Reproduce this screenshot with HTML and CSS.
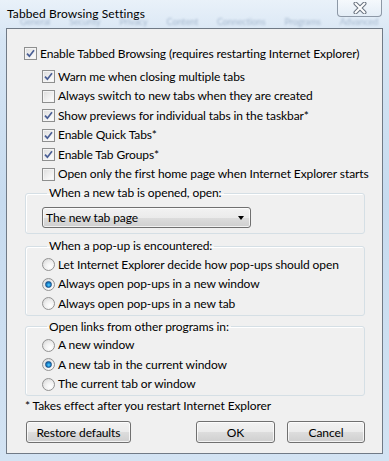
FILE: index.html
```html
<!DOCTYPE html>
<html>
<head>
<meta charset="utf-8">
<link rel="stylesheet" href="styles.css">
</head>
<body>
<div class="window">
  <div class="ghost" aria-hidden="true">
    <span>General</span><span>Security</span><span>Privacy</span><span>Content</span><span>Connections</span><span>Programs</span><span>Advanced</span>
  </div>
  <div class="titlebar">
    <div class="title">Tabbed Browsing Settings</div>
    <div class="close">
      <svg width="16" height="12" viewBox="0 0 16 12">
        <path d="M3.5 1.5 L12.5 10.5 M12.5 1.5 L3.5 10.5" stroke="#6b7480" stroke-width="4" stroke-linecap="round"/>
        <path d="M3.5 1.5 L12.5 10.5 M12.5 1.5 L3.5 10.5" stroke="#ffffff" stroke-width="2" stroke-linecap="round"/>
      </svg>
    </div>
  </div>
  <div class="panel">
    <label class="row first"><span class="cb checked"></span><span>Enable Tabbed Browsing (requires restarting Internet Explorer)</span></label>
    <div class="sub">
      <label class="row"><span class="cb checked"></span><span>Warn me when closing multiple tabs</span></label>
      <label class="row"><span class="cb"></span><span>Always switch to new tabs when they are created</span></label>
      <label class="row"><span class="cb checked"></span><span>Show previews for individual tabs in the taskbar*</span></label>
      <label class="row"><span class="cb checked"></span><span>Enable Quick Tabs*</span></label>
      <label class="row"><span class="cb checked"></span><span>Enable Tab Groups*</span></label>
      <label class="row"><span class="cb"></span><span>Open only the first home page when Internet Explorer starts</span></label>
    </div>
    <fieldset class="group g1">
      <legend>When a new tab is opened, open:</legend>
      <div class="combo"><span>The new tab page</span><span class="arrow"></span></div>
    </fieldset>
    <fieldset class="group g2">
      <legend>When a pop-up is encountered:</legend>
      <label class="row"><span class="rb"></span><span>Let Internet Explorer decide how pop-ups should open</span></label>
      <label class="row"><span class="rb on"></span><span>Always open pop-ups in a new window</span></label>
      <label class="row"><span class="rb"></span><span>Always open pop-ups in a new tab</span></label>
    </fieldset>
    <fieldset class="group g3">
      <legend>Open links from other programs in:</legend>
      <label class="row"><span class="rb"></span><span>A new window</span></label>
      <label class="row"><span class="rb on"></span><span>A new tab in the current window</span></label>
      <label class="row"><span class="rb"></span><span>The current tab or window</span></label>
    </fieldset>
    <div class="note">* Takes effect after you restart Internet Explorer</div>
    <div class="buttons">
      <div class="btn restore">Restore defaults</div>
      <div class="spacer"></div>
      <div class="btn ok">OK</div>
      <div class="btn cancel">Cancel</div>
    </div>
  </div>
</div>
</body>
</html>
```
FILE: styles.css
```css
html, body {
  margin: 0;
  padding: 0;
}
body {
  width: 389px;
  height: 461px;
  overflow: hidden;
  font-family: "Lato", "Noto Sans", sans-serif;
  font-size: 12px;
  letter-spacing: -0.1px;
  color: #000;
  background: linear-gradient(180deg, #e9f1f9 0px, #d6e5f4 40px, #c7dbef 200px, #d3e3f3 461px);
}
.window {
  position: relative;
  width: 389px;
  height: 461px;
}
.ghost {
  position: absolute;
  left: 20px;
  top: 16px;
  display: flex;
  gap: 19px;
  font-size: 9px;
  color: #4c6a90;
  opacity: 0.4;
  filter: blur(1.3px);
  white-space: nowrap;
}
.titlebar {
  position: relative;
  height: 28px;
  display: flex;
  justify-content: space-between;
  align-items: flex-start;
}
.title {
  padding: 6px 0 0 7px;
  font-size: 12px;
  letter-spacing: 0.1px;
  line-height: 16px;
}
.close {
  margin-right: 7px;
  width: 45px;
  height: 17px;
  box-sizing: border-box;
  border: 1px solid #8d98a6;
  border-top: none;
  border-radius: 0 0 4px 4px;
  background: linear-gradient(180deg, rgba(255,255,255,0.55), rgba(230,238,246,0.6));
  display: flex;
  align-items: center;
  justify-content: center;
}
.panel {
  margin-left: 6px;
  width: 377px;
  height: 426px;
  box-sizing: border-box;
  border: 1px solid #707a86;
  background: #f0f0f0;
  padding-top: 15px;
  display: flex;
  flex-direction: column;
}
.row {
  display: flex;
  align-items: center;
  height: 19.5px;
  gap: 3px;
  white-space: nowrap;
  line-height: 16px;
}
.first {
  margin-left: 17px;
  margin-bottom: 3.5px;
}
.sub {
  margin-left: 35px;
  display: flex;
  flex-direction: column;
}
.cb {
  flex: none;
  width: 13px;
  height: 13px;
  box-sizing: border-box;
  border: 1px solid #8e8f8f;
  background: linear-gradient(135deg, #dcdcdc 0%, #f2f2f2 60%, #ffffff 100%);
  box-shadow: inset 0 0 0 1px #f4f4f4;
  position: relative;
}
.cb.checked::after {
  content: "";
  position: absolute;
  left: 1px;
  top: 1px;
  width: 9px;
  height: 9px;
  background: url("data:image/svg+xml;utf8,<svg xmlns='http://www.w3.org/2000/svg' width='9' height='9' viewBox='0 0 9 9'><path d='M1 4.6 L3.4 7.2 L8 1.3' fill='none' stroke='%234a5f95' stroke-width='1.7'/></svg>") no-repeat;
}
.group {
  margin: 0 17px 0 18px;
  padding: 0;
  border: 1px solid #d5dfe5;
  border-radius: 3px;
  box-shadow: inset 1px 1px 0 #ffffff;
}
.group legend {
  margin-left: 5px;
  padding: 0 2px;
  line-height: 16px;
}
.g1 {
  padding: 6px 0 5px 16px;
  margin-top: 1px;
}
.combo {
  width: 209px;
  height: 21px;
  box-sizing: border-box;
  border: 1px solid #707070;
  border-radius: 3px;
  background: linear-gradient(180deg, #f2f2f2 0%, #ebebeb 50%, #dddddd 51%, #cfcfcf 100%);
  box-shadow: inset 0 0 0 1px rgba(255,255,255,0.7);
  display: flex;
  align-items: center;
  justify-content: space-between;
  padding: 0 6px 0 3px;
}
.arrow {
  width: 0;
  height: 0;
  border-left: 3.5px solid transparent;
  border-right: 3.5px solid transparent;
  border-top: 4px solid #000;
}
.g2, .g3 {
  margin-top: 3px;
  padding: 1px 0 1px 16px;
}
.g2 {
  margin-top: 4px;
}
.rb {
  flex: none;
  width: 13px;
  height: 13px;
  box-sizing: border-box;
  border-radius: 50%;
  border: 1px solid #929292;
  background: radial-gradient(circle at 65% 70%, #ffffff 0%, #f0f0f0 45%, #d2d2d2 100%);
  position: relative;
}
.rb.on::after {
  content: "";
  position: absolute;
  left: 2px;
  top: 2px;
  width: 7px;
  height: 7px;
  box-sizing: border-box;
  border-radius: 50%;
  border: 1px solid #1a4f87;
  background: radial-gradient(circle at 55% 60%, #5fd2ff 0%, #1e8fd6 40%, #0c4f8e 100%);
}
.note {
  margin: 2px 0 0 18px;
  height: 16px;
  line-height: 16px;
  white-space: nowrap;
}
.buttons {
  margin: 7px 17px 0 19px;
  display: flex;
  gap: 12px;
}
.spacer {
  flex: 1;
}
.btn {
  height: 22px;
  box-sizing: border-box;
  border: 1px solid #707070;
  border-radius: 3px;
  background: linear-gradient(180deg, #f2f2f2 0%, #ebebeb 50%, #dddddd 51%, #cfcfcf 100%);
  box-shadow: inset 0 0 0 1px rgba(255,255,255,0.75);
  display: flex;
  align-items: center;
  justify-content: center;
  white-space: nowrap;
}
.restore { width: 105px; }
.ok { width: 79px; }
.cancel { width: 78px; }
```
